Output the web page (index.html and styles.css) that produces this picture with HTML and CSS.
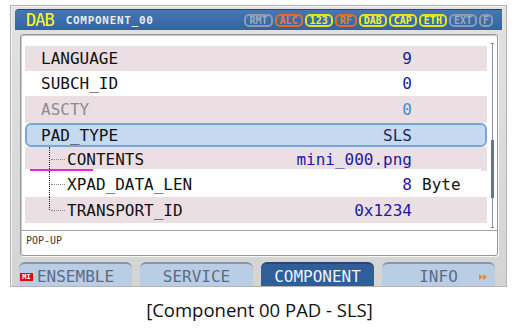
FILE: index.html
```html
<!DOCTYPE html>
<html lang="en">
<head>
    <meta charset="UTF-8">
    <meta name="viewport" content="width=device-width, initial-scale=1.0">
    <title>Component 00 PAD - SLS</title>
    <link rel="stylesheet" href="styles.css">
</head>
<body>
    <div class="device">
        <div class="titlebar">
            <span class="band">DAB</span>
            <span class="screen-name">COMPONENT_00</span>
            <div class="badges">
                <span class="badge off">RMT</span>
                <span class="badge warn">ALC</span>
                <span class="badge on">123</span>
                <span class="badge warn">RF</span>
                <span class="badge on">DAB</span>
                <span class="badge on">CAP</span>
                <span class="badge on">ETH</span>
                <span class="badge off">EXT</span>
                <span class="badge off single">F</span>
            </div>
        </div>

        <div class="panel">
            <div class="listbox">
                <div class="rows">
                    <div class="row shade"><span class="label">LANGUAGE</span><span class="value">9</span><span class="unit"></span></div>
                    <div class="row"><span class="label">SUBCH_ID</span><span class="value">0</span><span class="unit"></span></div>
                    <div class="row shade disabled"><span class="label">ASCTY</span><span class="value">0</span><span class="unit"></span></div>
                    <div class="row selected"><span class="label">PAD_TYPE</span><span class="value">SLS</span><span class="unit"></span></div>
                    <div class="row shade child contents"><span class="cursor"></span><span class="label">CONTENTS</span><span class="value">mini_000.png</span><span class="unit"></span></div>
                    <div class="row child"><span class="label">XPAD_DATA_LEN</span><span class="value">8</span><span class="unit">Byte</span></div>
                    <div class="row shade child last"><span class="label">TRANSPORT_ID</span><span class="value">0x1234</span><span class="unit"></span></div>
                </div>
                <div class="scroll"><div class="thumb"></div></div>
            </div>
            <div class="popup">POP-UP</div>
        </div>

        <div class="tabs">
            <div class="tab"><span class="mi">MI</span>ENSEMBLE</div>
            <div class="tab">SERVICE</div>
            <div class="tab active">COMPONENT</div>
            <div class="tab">INFO
                <svg class="more" width="9" height="6" viewBox="0 0 9 6">
                    <polygon points="0,0 4,3 0,6" fill="#f08a24"/>
                    <polygon points="4,0 8,3 4,6" fill="#f08a24"/>
                </svg>
            </div>
        </div>
    </div>

    <p class="caption">[Component 00 PAD - SLS]</p>
</body>
</html>
```

FILE: styles.css
```css
html, body {
    margin: 0;
    padding: 0;
    background-color: white;
    font-family: "DejaVu Sans Mono", monospace;
}

.device {
    box-sizing: border-box;
    width: 497px;
    height: 282px;
    margin: 5px 0 0 10px;
    padding: 3px 4px 0 4px;
    background: linear-gradient(#e2e2e2, #d4d4d4);
    border: 1px solid #b4b4b4;
    box-shadow: inset 1px 1px 0 #f2f2f2;
    display: flex;
    flex-direction: column;
    overflow: hidden;
}

/* title bar */
.titlebar {
    height: 21px;
    box-sizing: border-box;
    display: flex;
    align-items: center;
    padding: 0 9px 0 11px;
    background: linear-gradient(#4776b3, #3463a1);
    border-top: 1px solid #28487c;
    border-radius: 4px 0 0 0;
}

.band {
    color: #ffff10;
    font-size: 17px;
    letter-spacing: -1px;
    line-height: 20px;
}

.screen-name {
    margin-left: 12px;
    color: #e6ecf6;
    font-size: 11px;
    font-weight: bold;
    letter-spacing: 0.7px;
}

.badges {
    margin-left: auto;
    display: flex;
    gap: 2px;
}

.badge {
    box-sizing: border-box;
    height: 13px;
    padding: 0 3px;
    border: 2px solid;
    border-radius: 5px;
    font-size: 10px;
    font-weight: bold;
    line-height: 9px;
}

.badge.single { padding: 0 2px; }

.badge.off { color: #9eabbf; border-color: #8d9bb2; }
.badge.warn { color: #ee7a2c; border-color: #e06c26; }
.badge.on { color: #f4f424; border-color: #e4e418; }

/* main panel */
.panel {
    box-sizing: border-box;
    height: 223px;
    margin: 4px 4px 0 5px;
    background: white;
    border: 1px solid #979797;
    border-radius: 3px;
    box-shadow: 1px 1px 0 #f6f6f6, inset 1px 1px 1px #c8c8c8;
    display: flex;
    flex-direction: column;
}

.listbox {
    box-sizing: border-box;
    height: 196px;
    padding: 11px 0 0 4px;
    border-bottom: 1px solid #a2a2a2;
    display: flex;
    align-items: flex-start;
}

.rows {
    width: 462px;
    display: grid;
    grid-template-rows: 25px 25px 27px 24px 24px 26px 26px;
}

.row {
    position: relative;
    display: flex;
    align-items: center;
    font-size: 16px;
    color: #111;
}

.row.shade { background-color: #ebdfe3; }

.row.contents {
    background: linear-gradient(white, white) no-repeat left bottom / 456px 2px, #ebdfe3;
}

.label {
    flex: 1;
    padding-left: 16px;
}

.value {
    color: #1b1ba2;
    text-align: right;
}

.unit {
    width: 65px;
    padding-left: 10px;
    color: #111;
}

.row.disabled .label { color: #8d8d8d; }
.row.disabled .value { color: #4a88d2; }

.row.selected {
    box-sizing: border-box;
    background-color: #c5d9f0;
    border: 2px solid #7ba5d6;
    border-radius: 6px;
}

.row.selected .label { padding-left: 14px; }
.row.selected .value { color: #1c2466; }
.row.selected .unit { width: 63px; }

/* tree lines */
.row.child .label { padding-left: 42px; }

.row.child::before {
    content: "";
    position: absolute;
    left: 24px;
    top: 0;
    bottom: 0;
    border-left: 1px dotted #222;
}

.row.child.last::before { bottom: 50%; }

.row.child::after {
    content: "";
    position: absolute;
    left: 26px;
    top: 50%;
    width: 14px;
    border-top: 1px dotted #8a8a8a;
}

.cursor {
    position: absolute;
    left: 5px;
    bottom: 0;
    width: 63px;
    height: 2px;
    background-color: #f020e0;
}

.scroll {
    box-sizing: border-box;
    width: 3px;
    height: 185px;
    margin: -3px 0 0 4px;
    border-top: 1px solid #7d8a9c;
    border-bottom: 1px solid #7d8a9c;
    background: linear-gradient(#8794a6, #8794a6) center / 1px 100% no-repeat;
}

.thumb {
    height: 58px;
    margin-top: 96px;
    background-color: #67758b;
}

.popup {
    padding: 4px 0 0 5px;
    font-size: 10px;
    line-height: 12px;
    color: #3a3a3a;
}

/* bottom tabs */
.tabs {
    display: flex;
    gap: 8px;
    margin-top: 6px;
    padding-left: 4px;
}

.tab {
    position: relative;
    box-sizing: border-box;
    width: 113px;
    height: 24px;
    padding-top: 4px;
    background-color: #b9cde5;
    border-top: 2px solid #8595ad;
    border-radius: 6px 6px 0 0;
    color: #5c6c84;
    font-size: 16px;
    line-height: 17px;
    text-align: center;
}

.tab.active {
    background-color: #2f5e99;
    border-top-color: #2a4672;
    color: #eef2fa;
}

.mi {
    position: absolute;
    left: 1px;
    bottom: 5px;
    width: 13px;
    height: 8px;
    background-color: #e00b0b;
    color: white;
    font-size: 7px;
    font-weight: bold;
    line-height: 8px;
    text-align: center;
}

.more {
    position: absolute;
    right: 7px;
    top: 10px;
}

.caption {
    margin: 10px 0 0 0;
    text-align: center;
    font-family: "Open Sans", sans-serif;
    font-size: 18.5px;
    line-height: 26px;
    color: #111;
}
```
